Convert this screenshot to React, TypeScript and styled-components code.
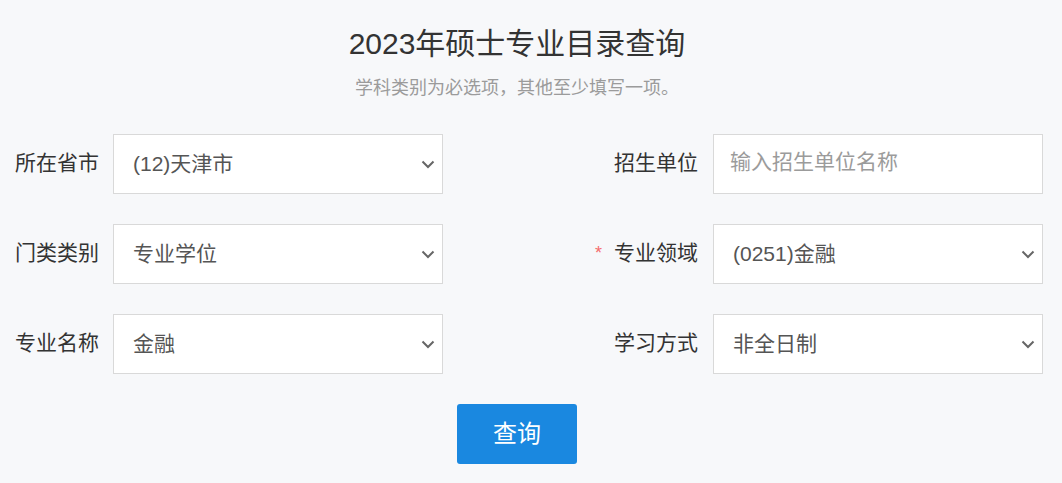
import styled, { createGlobalStyle } from 'styled-components';

const GlobalStyle = createGlobalStyle`
  html, body {
    margin: 0;
    padding: 0;
    background: #f7f8fa;
  }

  body {
    font-family: 'Liberation Sans', 'Noto Sans CJK SC', sans-serif;
    color: #333;
  }

  * {
    box-sizing: border-box;
  }
`;

const Page = styled.div`
  width: 1062px;
  height: 483px;
  overflow: hidden;
  background: #f7f8fa;
`;

const Header = styled.header`
  width: 1034px;
  padding-top: 24px;
  text-align: center;
`;

const Title = styled.h1`
  margin: 0;

  font-weight: 400;
  font-size: 30px;
  line-height: 40px;
  color: #333;
`;

const Hint = styled.p`
  margin: 12px 0 0;

  font-size: 18px;
  line-height: 24px;
  color: #9b9b9b;
`;

const Form = styled.form`
  display: grid;
  grid-template-columns: 83px 330px 1fr 330px;
  grid-auto-rows: 60px;
  column-gap: 15px;
  row-gap: 30px;
  align-items: center;

  margin-top: 34px;
  padding: 0 19px 0 15px;
`;

const Label = styled.label<{ $right?: boolean }>`
  display: flex;
  align-items: center;
  justify-content: ${({ $right }) => ($right ? 'flex-end' : 'flex-start')};

  padding-bottom: 3px;

  font-size: 21px;
  line-height: 28px;
  color: #333;
  white-space: nowrap;
`;

const Required = styled.span`
  margin-right: 12px;

  font-size: 18px;
  color: #f56c6c;
`;

const Box = styled.div`
  display: flex;
  align-items: center;
  justify-content: space-between;

  height: 60px;
  padding: 0 7px 0 19px;
  border: 1px solid #d9d9d9;
  background: #fff;

  font-size: 21px;
  color: #555;

  span {
    padding-bottom: 4px;
  }
`;

const Input = styled.input`
  width: 100%;
  height: 60px;
  padding: 0 16px 4px;
  border: 1px solid #d9d9d9;
  outline: none;
  background: #fff;

  font-family: inherit;
  font-size: 21px;
  color: #555;

  &::placeholder {
    color: #9b9b9b;
  }
`;

const Actions = styled.div`
  display: flex;
  justify-content: center;

  width: 1034px;
  margin-top: 30px;
`;

const Button = styled.button`
  width: 120px;
  height: 60px;
  padding: 0 0 5px;
  border: none;
  border-radius: 3px;
  background: #1a88e0;

  font-family: inherit;
  font-size: 24px;
  color: #fff;
  cursor: pointer;
`;

const Chevron = () => (
  <svg width='14' height='9' viewBox='0 0 14 9' fill='none'>
    <polyline points='1.5,1.5 7,7 12.5,1.5' stroke='#666' strokeWidth='2' />
  </svg>
);

const Select = ({ value }: { value: string }) => (
  <Box>
    <span>{value}</span>
    <Chevron />
  </Box>
);

const App = () => {
  return (
    <Page>
      <GlobalStyle />
      <Header>
        <Title>2023年硕士专业目录查询</Title>
        <Hint>学科类别为必选项，其他至少填写一项。</Hint>
      </Header>

      <Form onSubmit={(e) => e.preventDefault()}>
        <Label>所在省市</Label>
        <Select value='(12)天津市' />
        <Label $right>招生单位</Label>
        <Input placeholder='输入招生单位名称' />

        <Label>门类类别</Label>
        <Select value='专业学位' />
        <Label $right>
          <Required>*</Required>专业领域
        </Label>
        <Select value='(0251)金融' />

        <Label>专业名称</Label>
        <Select value='金融' />
        <Label $right>学习方式</Label>
        <Select value='非全日制' />
      </Form>

      <Actions>
        <Button type='button'>查询</Button>
      </Actions>
    </Page>
  );
};

export default App;
